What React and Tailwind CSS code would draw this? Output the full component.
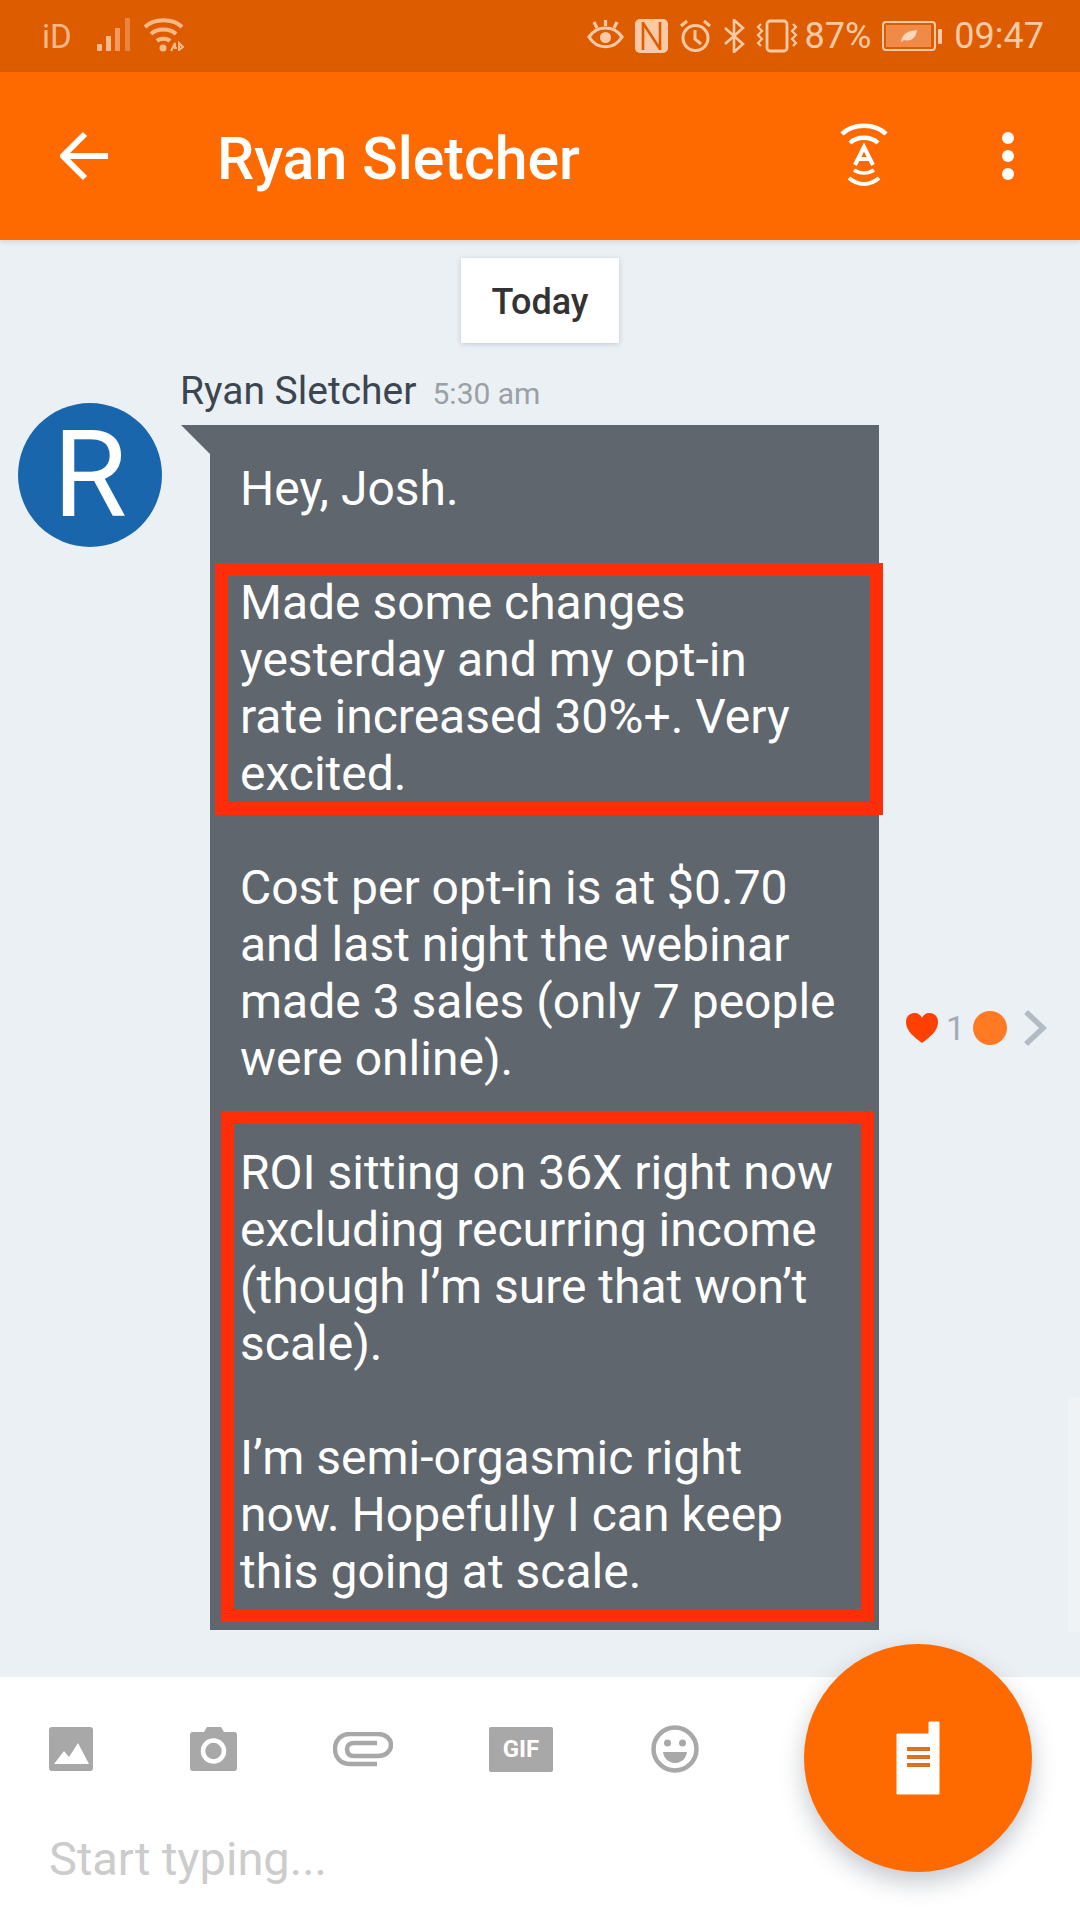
import React from "react";

const R = { fontFamily: "Roboto, sans-serif" };

function Signal() {
  return (
    <svg width="36" height="36" viewBox="0 0 36 36" className="mt-[-2px]">
      <rect x="0" y="27" width="5" height="7" rx="1" fill="#fbb98a" />
      <rect x="9" y="19" width="5" height="15" fill="#fbb98a" />
      <rect x="18" y="11" width="5" height="23" fill="#f59a5c" />
      <rect x="28" y="1" width="5" height="33" fill="#ec8440" />
    </svg>
  );
}

function Wifi() {
  return (
    <svg width="41" height="36" viewBox="0 0 41 36" fill="none" stroke="#fbb98a" className="mt-[-2px]">
      <path d="M2 10 C11 1 30 1 39 10" strokeWidth="4" />
      <path d="M8 17 C14 11 27 11 33 17" strokeWidth="4" />
      <path d="M14 24 C17 21 24 21 27 24" strokeWidth="4" />
      <circle cx="20" cy="31" r="3.5" fill="#fbb98a" stroke="none" />
      <path d="M28 34 l4 -8 v5 h2 M36 34 v-8 l4 4 l-4 3" strokeWidth="2" />
    </svg>
  );
}

function Eye() {
  return (
    <svg width="37" height="34" viewBox="0 0 37 34" fill="none" stroke="#fbc9a5" strokeWidth="3.2">
      <path d="M2 18 C10 6 27 6 35 18 C27 31 10 31 2 18 Z" />
      <circle cx="18.5" cy="18.5" r="5.5" fill="#fbc9a5" stroke="none" />
      <path d="M18.5 1 v6 M7 3 l3 6 M30 3 l-3 6" />
    </svg>
  );
}

function Nfc() {
  return (
    <svg width="33" height="34" viewBox="0 0 33 34">
      <rect width="33" height="34" rx="5" fill="#fbc9a5" />
      <path d="M8 3 v28 M25 3 v28 M8 4 L25 30" fill="none" stroke="#dd5c00" strokeWidth="2.6" />
    </svg>
  );
}

function Alarm() {
  return (
    <svg width="33" height="34" viewBox="0 0 33 34" fill="none" stroke="#fbc9a5" strokeWidth="3">
      <circle cx="16.5" cy="19" r="12.5" />
      <path d="M16 11 v9 l6 5 M2 7 l6 -5 M31 7 l-6 -5" />
    </svg>
  );
}

function Bluetooth() {
  return (
    <svg width="22" height="34" viewBox="0 0 22 34" fill="none" stroke="#fbc9a5" strokeWidth="2.6">
      <path d="M2 9 L20 25 L11 33 V1 L20 9 L2 25" />
    </svg>
  );
}

function Vibrate() {
  return (
    <svg width="42" height="34" viewBox="0 0 42 34" fill="none" stroke="#fbc9a5" strokeWidth="2.8">
      <rect x="11" y="2" width="20" height="30" rx="3" />
      <path d="M5 5 l-3 3 l4 4 l-4 4 l4 4 l-4 4 l3 3 M37 5 l3 3 l-4 4 l4 4 l-4 4 l4 4 l-3 3" strokeWidth="2.2" />
    </svg>
  );
}

function Battery() {
  return (
    <svg width="61" height="32" viewBox="0 0 61 32" fill="none">
      <rect x="1" y="2" width="52" height="28" rx="3" stroke="#fbc9a5" strokeWidth="2" />
      <rect x="4" y="5" width="45" height="22" fill="#f08a48" />
      <rect x="56" y="9" width="4" height="15" rx="1" fill="#fbc9a5" />
      <path d="M19 22 C20 13 27 11 35 10 C34 18 29 22 22 20 Z" fill="#fbd6bb" />
    </svg>
  );
}

function Antenna() {
  return (
    <svg width="48" height="68" viewBox="0 0 48 68" fill="none" stroke="#fff" strokeWidth="4.5">
      <path d="M2 12 C13 1 35 1 46 12" />
      <path d="M10 21 C17 14 31 14 38 21" />
      <path d="M15 43 L24 25 L33 43 M18 37 H30" strokeWidth="4" />
      <path d="M14 48 C20 52 28 52 34 48" strokeWidth="3.5" />
      <path d="M9 56 C18 64 30 64 39 56" strokeWidth="4" />
    </svg>
  );
}

function ImageIcon() {
  return (
    <svg width="44" height="44" viewBox="0 0 44 44">
      <rect width="44" height="44" rx="3" fill="#a8a8a8" />
      <path d="M5 37 L15 24 L20 30 L29 16 L40 37 Z" fill="#fff" />
    </svg>
  );
}

function Camera() {
  return (
    <svg width="47" height="44" viewBox="0 0 47 44">
      <path d="M3 5 H14 L17 0 H31 L34 5 H44 Q47 5 47 8 V41 Q47 44 44 44 H3 Q0 44 0 41 V8 Q0 5 3 5 Z" fill="#a8a8a8" />
      <circle cx="23.5" cy="24" r="10.5" fill="#a8a8a8" stroke="#fff" strokeWidth="4.5" />
    </svg>
  );
}

function Clip() {
  return (
    <svg width="60" height="35" viewBox="0 0 60 35" fill="none" stroke="#a8a8a8" strokeWidth="4.5">
      <path d="M44 32 H17 C8 32 2 26 2 17 C2 8 8 2 17 2 H45 C53 2 58 7 58 13 C58 19 53 24 45 24 H21 C16 24 14 21 14 17 C14 13 17 11 21 11 H44" />
    </svg>
  );
}

function Smile() {
  return (
    <svg width="48" height="48" viewBox="0 0 48 48">
      <circle cx="24" cy="24" r="21.5" fill="none" stroke="#a8a8a8" strokeWidth="4.5" />
      <circle cx="16.5" cy="18" r="3.5" fill="#a8a8a8" />
      <circle cx="31.5" cy="18" r="3.5" fill="#a8a8a8" />
      <path d="M12 27 H36 C35 34 30 38 24 38 C18 38 13 34 12 27 Z" fill="#a8a8a8" />
    </svg>
  );
}

function Walkie() {
  return (
    <svg width="44" height="74" viewBox="0 0 44 74">
      <path d="M1 13 H33 V1 H43 V73 H1 Z" fill="#fff" stroke="#fff" strokeWidth="1" strokeLinejoin="round" />
      <rect x="11" y="26" width="23" height="4" fill="#e0701c" />
      <rect x="11" y="34" width="23" height="4" fill="#e0701c" />
      <rect x="11" y="42" width="23" height="4" fill="#e0701c" />
    </svg>
  );
}

function Marked({ inset, children }) {
  return (
    <div className="relative">
      {children}
      <div className={`absolute border-[13px] border-[#ff2d08] ${inset}`} />
    </div>
  );
}

export default function App() {
  return (
    <div className="relative flex h-[1920px] w-[1080px] flex-col overflow-hidden bg-white" style={R}>
      <div className="flex h-[72px] items-center justify-between bg-[#dd5c00] pl-[42px] pr-[36px]">
        <div className="flex items-center">
          <span className="text-[33px] leading-none text-[#fbb98a]">iD</span>
          <div className="ml-[25px] flex items-center gap-[10px]">
            <Signal />
            <Wifi />
          </div>
        </div>
        <div className="flex items-center gap-[11px]">
          <Eye />
          <Nfc />
          <Alarm />
          <Bluetooth />
          <Vibrate />
          <span className="ml-[-4px] text-[36px] leading-none text-[#fbc9a5]">87%</span>
          <Battery />
          <span className="text-[36px] leading-none text-[#fbc9a5]">09:47</span>
        </div>
      </div>

      <div className="relative z-10 flex h-[168px] items-center bg-[#ff6a00] shadow-[0_2px_5px_rgba(0,0,0,0.12)]">
        <svg width="50" height="50" viewBox="0 0 50 50" fill="none" stroke="#fff" strokeWidth="6" className="ml-[60px]">
          <path d="M48 25 H4 M25 3 L3 25 L25 47" />
        </svg>
        <span className="ml-[107px] mt-[4px] text-[59px] font-medium leading-none text-white">Ryan Sletcher</span>
        <div className="ml-auto mr-[192px] flex">
          <Antenna />
        </div>
        <div className="absolute left-[1002px] top-[60px] flex flex-col gap-[6px]">
          <div className="h-[12px] w-[12px] rounded-full bg-white" />
          <div className="h-[12px] w-[12px] rounded-full bg-white" />
          <div className="h-[12px] w-[12px] rounded-full bg-white" />
        </div>
      </div>

      <div className="flex h-[1437px] flex-col bg-[#ebf0f4]">
        <div className="mt-[18px] flex justify-center">
          <div className="flex h-[85px] w-[158px] items-center justify-center bg-white pt-[3px] text-[36px] font-medium text-[#333333] shadow-[0_1px_5px_rgba(60,80,110,0.25)]">
            Today
          </div>
        </div>
        <div className="mt-[23px] flex">
          <div className="ml-[18px] mt-[37px] flex h-[144px] w-[144px] items-center justify-center rounded-full bg-[#1a66ad] text-[120px] font-normal leading-none text-white">
            R
          </div>
          <div className="ml-[19px] flex flex-col">
            <div className="flex h-[59px] items-center pb-[8px] pl-[-1px]">
              <span className="ml-[-1px] text-[39px] leading-none text-[#3c4650]">Ryan Sletcher</span>
              <span className="ml-[16px] mt-[4px] text-[30px] leading-none text-[#9aa0a6]">5:30 am</span>
            </div>
            <div className="flex">
              <svg width="29" height="29" viewBox="0 0 29 29" className="shrink-0">
                <path d="M0 0 H29 V29 Z" fill="#5f666d" />
              </svg>
              <div className="flex w-[669px] flex-col gap-[57px] bg-[#5f666d] pb-[30px] pl-[30px] pt-[35px] text-[48px] leading-[57px] text-white">
                <p>Hey, Josh.</p>
                <Marked inset="-left-[25px] -right-[4px] -top-[11px] -bottom-[13px]">
                  <p>
                    Made some changes<br />
                    yesterday and my opt-in<br />
                    rate increased 30%+. Very<br />
                    excited.
                  </p>
                </Marked>
                <p>
                  Cost per opt-in is at $0.70<br />
                  and last night the webinar<br />
                  made 3 sales (only 7 people<br />
                  were online).
                </p>
                <Marked inset="-left-[19px] right-[5px] -top-[33px] -bottom-[22px]">
                  <p>
                    ROI sitting on 36X right now<br />
                    excluding recurring income<br />
                    (though I’m sure that won’t<br />
                    scale).<br />
                    <br />
                    I’m semi-orgasmic right<br />
                    now. Hopefully I can keep<br />
                    this going at scale.
                  </p>
                </Marked>
              </div>
            </div>
          </div>
          <div className="ml-[27px] mt-[59px] flex items-center">
            <svg width="32" height="30" viewBox="0 0 32 30">
              <path d="M16 30 C8 24 0 18 0 9 C0 3 4 0 9 0 C12 0 15 2 16 5 C17 2 20 0 23 0 C28 0 32 3 32 9 C32 18 24 24 16 30 Z" fill="#ff4000" />
            </svg>
            <span className="ml-[8px] text-[34px] leading-none text-[#a3acb5]">1</span>
            <div className="ml-[8px] h-[34px] w-[34px] rounded-full bg-[#ff7a22]" />
            <svg width="24" height="36" viewBox="0 0 24 36" fill="none" stroke="#b3bcc5" strokeWidth="5.5" className="ml-[16px]">
              <path d="M3 2 L20 18 L3 34" />
            </svg>
          </div>
        </div>
      </div>

      <div className="absolute left-[1068px] top-[1397px] h-[235px] w-[12px] bg-[#eff3f6]" />

      <div className="flex flex-1 flex-col bg-white pl-[49px]">
        <div className="mt-[48px] flex h-[48px] items-center">
          <ImageIcon />
          <div className="ml-[97px]"><Camera /></div>
          <div className="ml-[96px]"><Clip /></div>
          <div className="ml-[96px] flex h-[45px] w-[64px] items-center justify-center rounded-[2px] bg-[#a8a8a8] text-[24px] font-bold leading-none text-white">GIF</div>
          <div className="ml-[98px]"><Smile /></div>
        </div>
        <div className="mt-[57px] text-[47px] leading-[57px] text-[#cccccc]">Start typing...</div>
      </div>

      <div className="absolute left-[804px] top-[1644px] flex h-[228px] w-[228px] items-center justify-center rounded-full bg-[#ff6a00] shadow-[0_10px_24px_rgba(60,70,90,0.3)]">
        <Walkie />
      </div>
    </div>
  );
}
